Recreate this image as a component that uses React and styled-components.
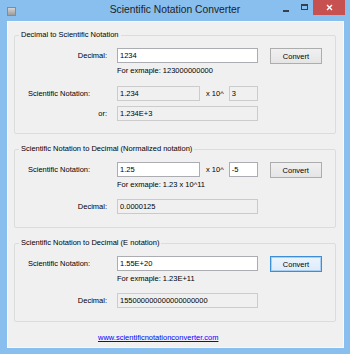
import React from 'react'
import styled, { createGlobalStyle } from 'styled-components'

const GlobalStyle = createGlobalStyle`
  html, body {
    margin: 0;
    padding: 0;
    background: #88bfee;
  }
  * {
    box-sizing: border-box;
  }
`

const Window = styled.div`
  width: 350px;
  height: 354px;
  background: #88bfee;
  display: flex;
  flex-direction: column;
  font-family: 'Liberation Sans', Arial, sans-serif;
  font-size: 7.5px;
  color: #000;
`

const TitleBar = styled.div`
  height: 21px;
  flex: none;
  display: grid;
  grid-template-columns: 1fr auto 1fr;
  align-items: start;
`

const AppIcon = styled.div`
  width: 9px;
  height: 9px;
  margin: 7px 0 0 7px;
  border: 1px solid #8a8a8a;
  background: linear-gradient(#d4d4d4, #9c9c9c);
`

const Title = styled.div`
  font-size: 10.3px;
  line-height: 12px;
  padding-top: 4px;
  color: #222;
`

const Controls = styled.div`
  justify-self: end;
  display: flex;
  margin-right: 5px;
`

const CtrlButton = styled.div`
  width: ${(p) => p.$w}px;
  height: 15px;
  display: flex;
  align-items: center;
  justify-content: center;
  background: ${(p) => p.$bg || 'transparent'};
`

const MinGlyph = styled.span`
  width: 6px;
  height: 2px;
  margin-top: 6px;
  background: #35404c;
`

const MaxGlyph = styled.span`
  width: 7px;
  height: 6px;
  margin-top: -1px;
  border: 1px solid #35404c;
  border-top-width: 2px;
`

const Client = styled.div`
  flex: 1;
  margin: 0 6px 6px 7px;
  background: #f0f0f0;
  border: 1px solid #f6f9fc;
  padding: 8px 7px 0 6px;
  display: flex;
  flex-direction: column;
`

const Group = styled.fieldset`
  margin: ${(p) => (p.$first ? 0 : 10)}px 0 0 0;
  padding: 8px 0 ${(p) => p.$pb}px 13px;
  border: 1px solid #dcdcdc;
  border-radius: 2px;
  min-width: 0;
`

const Legend = styled.legend`
  margin-left: -9px;
  padding: 0 2px;
  line-height: 10px;
  font-size: 7.5px;
`

const Row = styled.div`
  display: flex;
  align-items: flex-start;
  margin-top: ${(p) => p.$mt || 0}px;
`

const Label = styled.div`
  width: 89px;
  flex: none;
  height: 15px;
  line-height: 15px;
  text-align: ${(p) => (p.$right ? 'right' : 'left')};
  padding-right: 10px;
`

const Field = styled.input`
  width: ${(p) => p.$w}px;
  height: 15px;
  flex: none;
  margin: 0;
  padding: 0 2px;
  font-family: 'Liberation Sans', Arial, sans-serif;
  font-size: 7.5px;
  color: #000;
  border: 1px solid ${(p) => (p.readOnly ? (p.$hover ? '#b4cfe8' : '#cccccc') : '#abadb3')};
  background: ${(p) => (p.readOnly ? '#f0f0f0' : '#ffffff')};
  outline: none;
`

const Times = styled.span`
  margin: 0 5px 0 6px;
  line-height: 15px;
`

const Button = styled.button`
  width: 52px;
  height: 16px;
  margin: 0 0 0 12px;
  padding: 0;
  font-family: 'Liberation Sans', Arial, sans-serif;
  font-size: 7.5px;
  color: #000;
  border: 1px solid ${(p) => (p.$focus ? '#3c8fd6' : '#adadad')};
  box-shadow: ${(p) => (p.$focus ? 'inset 0 0 0 1px #a8d0f4' : 'none')};
  background: ${(p) => (p.$focus ? 'linear-gradient(#ecf4fc, #dcecfc)' : 'linear-gradient(#f0f0f0, #e5e5e5)')};
`

const Hint = styled.div`
  margin: 2px 0 0 89px;
  line-height: 10px;
`

const Footer = styled.div`
  margin-top: 11px;
  padding-left: 84px;
  line-height: 10px;
`

const Link = styled.a`
  color: #0000ff;
  text-decoration: underline;
`

function CloseGlyph() {
  return (
    <svg width="7" height="7" viewBox="0 0 7 7">
      <path d="M1 1L6 6M6 1L1 6" stroke="#fff" strokeWidth="1.4" />
    </svg>
  )
}

export default function App() {
  return (
    <Window>
      <GlobalStyle />
      <TitleBar>
        <AppIcon />
        <Title>Scientific Notation Converter</Title>
        <Controls>
          <CtrlButton $w={18}>
            <MinGlyph />
          </CtrlButton>
          <CtrlButton $w={18}>
            <MaxGlyph />
          </CtrlButton>
          <CtrlButton $w={32} $bg="#c75050">
            <CloseGlyph />
          </CtrlButton>
        </Controls>
      </TitleBar>
      <Client>
        <Group $first $pb={12}>
          <Legend>Decimal to Scientific Notation</Legend>
          <Row>
            <Label $right>Decimal:</Label>
            <Field $w={141} defaultValue="1234" />
            <Button>Convert</Button>
          </Row>
          <Hint>For exmaple: 123000000000</Hint>
          <Row $mt={10}>
            <Label>Scientific Notation:</Label>
            <Field $w={83} readOnly value="1.234" />
            <Times>x 10^</Times>
            <Field $w={29} readOnly value="3" />
          </Row>
          <Row $mt={5}>
            <Label $right>or:</Label>
            <Field $w={141} readOnly value="1.234E+3" />
          </Row>
        </Group>
        <Group $pb={13}>
          <Legend>Scientific Notation to Decimal (Normalized notation)</Legend>
          <Row>
            <Label>Scientific Notation:</Label>
            <Field $w={83} defaultValue="1.25" />
            <Times>x 10^</Times>
            <Field $w={29} defaultValue="-5" />
            <Button>Convert</Button>
          </Row>
          <Hint>For exmaple: 1.23 x 10^11</Hint>
          <Row $mt={9}>
            <Label $right>Decimal:</Label>
            <Field $w={141} readOnly $hover value="0.0000125" />
          </Row>
        </Group>
        <Group $pb={13}>
          <Legend>Scientific Notation to Decimal (E notation)</Legend>
          <Row>
            <Label>Scientific Notation:</Label>
            <Field $w={141} defaultValue="1.55E+20" />
            <Button $focus>Convert</Button>
          </Row>
          <Hint>For exmaple: 1.23E+11</Hint>
          <Row $mt={9}>
            <Label $right>Decimal:</Label>
            <Field $w={141} readOnly value="155000000000000000000" />
          </Row>
        </Group>
        <Footer>
          <Link href="#">www.scientificnotationconverter.com</Link>
        </Footer>
      </Client>
    </Window>
  )
}
